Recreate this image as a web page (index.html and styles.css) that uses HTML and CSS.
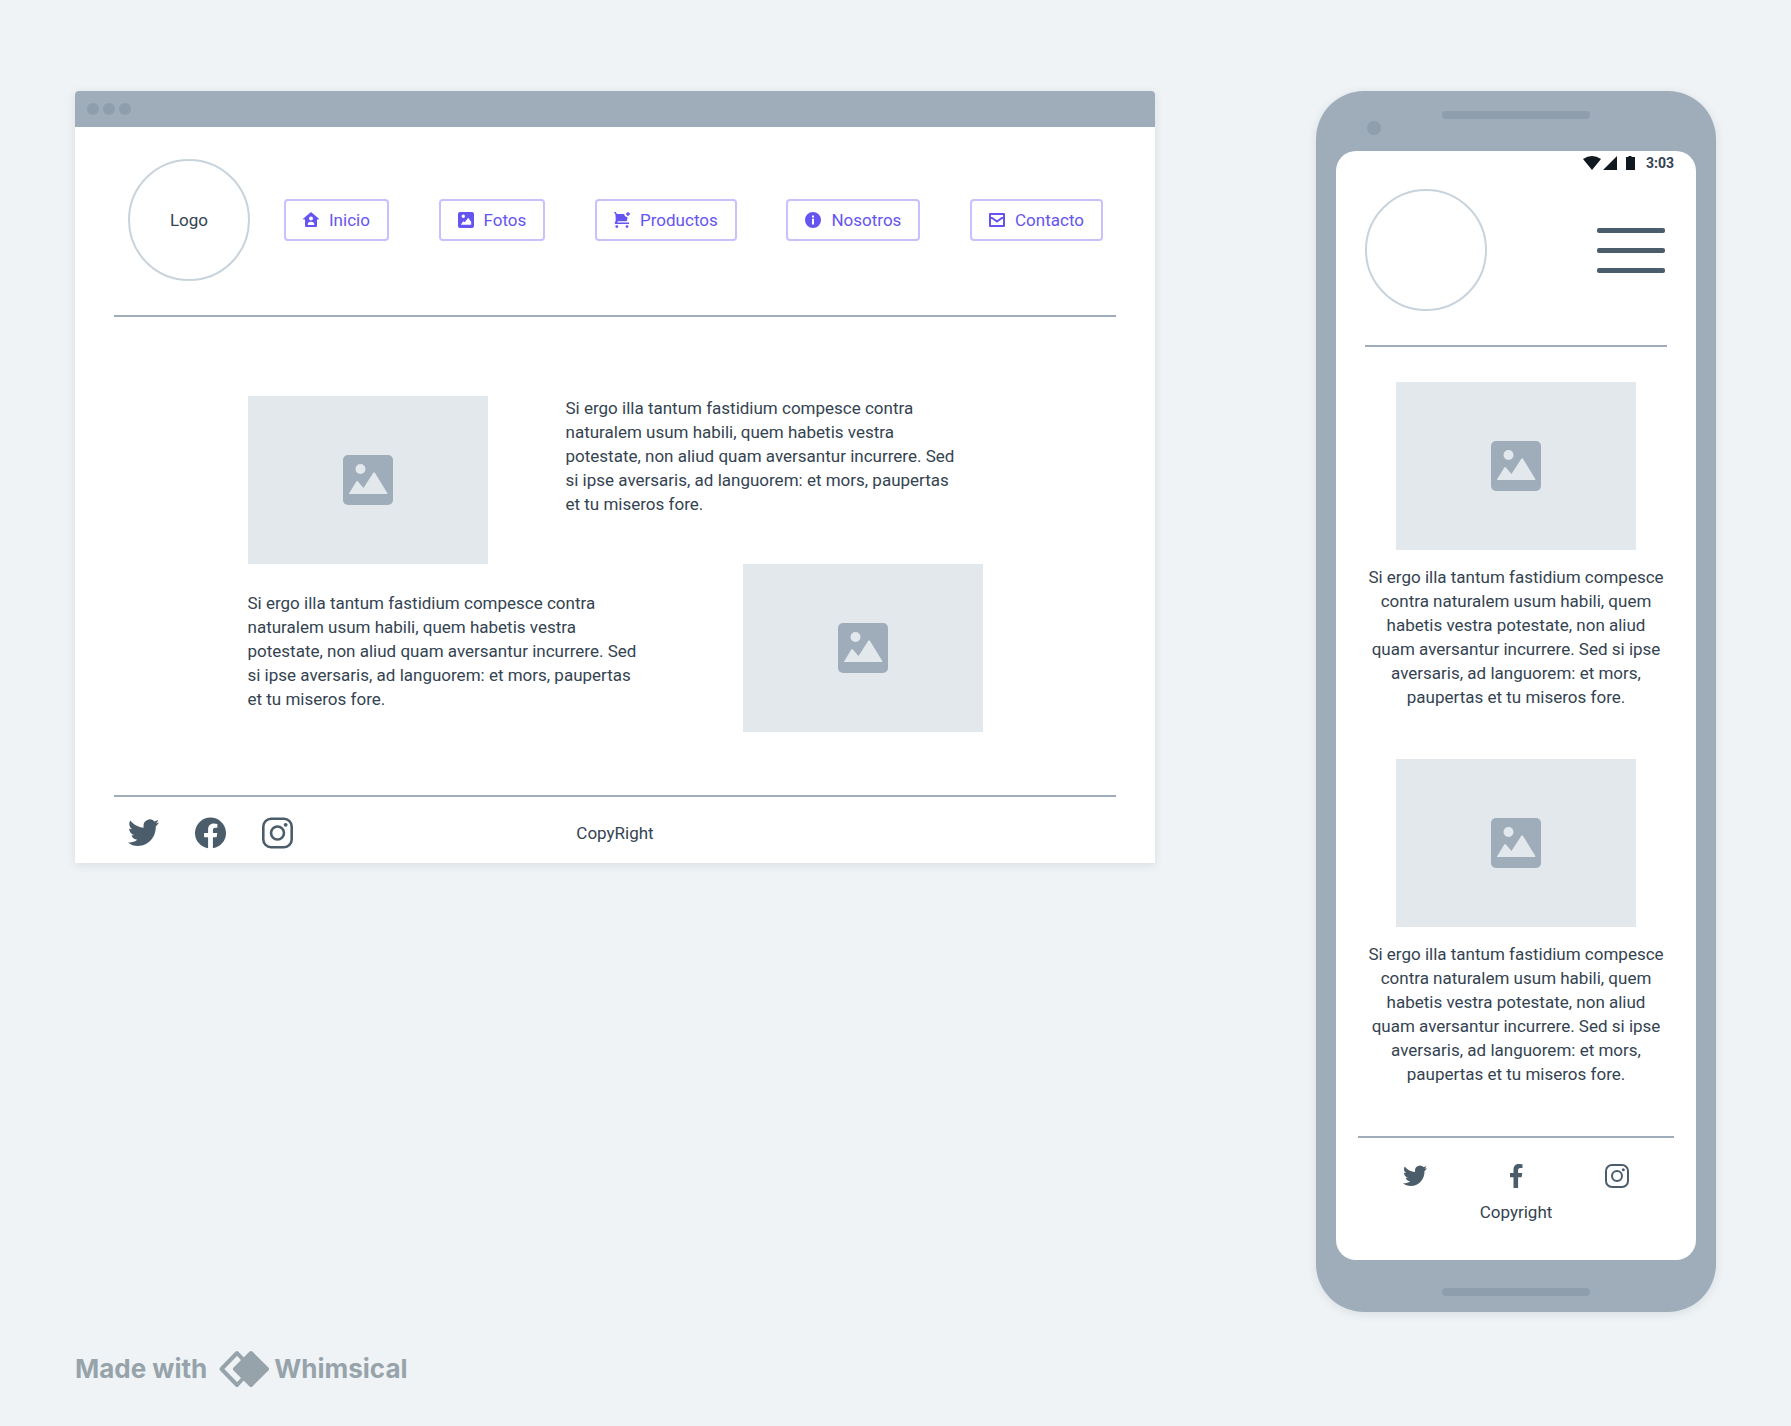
FILE: index.html
```html
<!DOCTYPE html>
<html lang="es">
<head>
<meta charset="utf-8">
<meta name="viewport" content="width=device-width, initial-scale=1">
<title>Wireframe</title>
<link rel="stylesheet" href="styles.css">
</head>
<body>
<svg class="sprite" aria-hidden="true">
  <symbol id="picture" viewBox="0 0 50 50">
    <rect width="50" height="50" rx="5" fill="#9eadb9"/>
    <circle cx="17.500" cy="14" r="5" fill="#e2e8ec"/>
    <path d="M6 38.500 13.300 26.500q.8-1.200 1.600 0l5.600 6.500 9.800-15.200q.8-1.200 1.600 0L44.300 38q.5 1-.6 1H6.300q-.6 0-.3-.5z" fill="#e2e8ec"/>
  </symbol>
  <symbol id="twitter" viewBox="0 0 24 21">
    <path d="M24 2.400c-.9.4-1.600.6-2.500.7.900-.6 1.600-1.500 1.900-2.600-.9.500-1.900.9-2.900 1.100A4.900 4.900 0 0 0 12 5.100c0 .5 0 .900.100 1.300C8 6.200 4.400 4.100 1.700.900c-1.300 2.300-.7 5.200 1.400 6.700-.8 0-1.500-.2-2.200-.6 0 2.500 1.700 4.600 4 5.100-.7.200-1.500.2-2.200.1.600 2 2.400 3.400 4.500 3.500-1.900 1.500-4.500 2.400-7.200 2.100C2.200 19.700 4.900 20.500 7.500 20.500c9.200 0 14.200-7.700 14-15C22.500 4.500 23.400 3.600 24 2.400z" fill="currentColor"/>
  </symbol>
  <symbol id="instagram" viewBox="0 0 24 24">
    <g fill="none" stroke="currentColor" stroke-width="2"><rect x="1" y="1" width="22" height="22" rx="6"/><circle cx="12" cy="12" r="5"/></g>
    <circle cx="18.300" cy="5.700" r="1.500" fill="currentColor"/>
  </symbol>
</svg>

<main class="board">
  <section class="browser" aria-label="Escritorio">
    <div class="titlebar"><i></i><i></i><i></i></div>
    <div class="page">
      <header class="page-header">
        <div class="logo">Logo</div>
        <nav class="menu">
          <button type="button"><svg viewBox="0 0 16 16"><path fill-rule="evenodd" d="M8 0 16 6.800 15.500 7.500H14V14a1 1 0 0 1-1 1H3a1 1 0 0 1-1-1V7.500H.5L0 6.800zM8 4.500a2 2 0 1 0 0 4 2 2 0 0 0 0-4zM4.800 13h6.400v-1c0-3-6.400-3-6.400 0z"/></svg>Inicio</button>
          <button type="button"><svg viewBox="0 0 16 16"><path fill-rule="evenodd" d="M2 0h12a2 2 0 0 1 2 2v12a2 2 0 0 1-2 2H2a2 2 0 0 1-2-2V2a2 2 0 0 1 2-2zm3.300 2.600a1.700 1.700 0 1 0 0 3.400 1.700 1.700 0 0 0 0-3.400zM2.800 12.800h10.400V10L10.300 5.800 6.700 10.200 5.300 9.300z"/></svg>Fotos</button>
          <button type="button"><svg viewBox="0 0 16 16"><path d="M0 0h1.600L3 2h7.200q.2 2.800 3.300 3.200L13 8.500q-.2.700-1 .7H3.800l-.5 1.300H15V12H1.600q-1.300-.3-.8-1.500l1-2L1.400 2.500z"/><path d="M13.300 0h1.400v1.300H16v1.400h-1.300V4h-1.400V2.700H12V1.300h1.300z"/><circle cx="2.800" cy="14.600" r="1.400"/><circle cx="13" cy="14.600" r="1.400"/></svg>Productos</button>
          <button type="button"><svg viewBox="0 0 16 16"><path fill-rule="evenodd" d="M8 0a8 8 0 1 1 0 16A8 8 0 0 1 8 0zM7 3.500v2h2v-2zM7 6.700v5.800h2V6.700z"/></svg>Nosotros</button>
          <button type="button"><svg viewBox="0 0 16 16"><path d="M1 2h14v12H1zM1 4.500 8 9.500 15 4.500" fill="none" stroke="currentColor" stroke-width="2" stroke-linejoin="round"/></svg>Contacto</button>
        </nav>
      </header>
      <div class="articles">
        <div class="picture"><svg><use href="#picture"/></svg></div>
        <p class="lead">Si ergo illa tantum fastidium compesce contra naturalem usum habili, quem habetis vestra potestate, non aliud quam aversantur incurrere. Sed si ipse aversaris, ad languorem: et mors, paupertas et tu miseros fore.</p>
        <p class="second">Si ergo illa tantum fastidium compesce contra naturalem usum habili, quem habetis vestra potestate, non aliud quam aversantur incurrere. Sed si ipse aversaris, ad languorem: et mors, paupertas et tu miseros fore.</p>
        <div class="picture"><svg><use href="#picture"/></svg></div>
      </div>
      <footer class="page-footer">
        <div class="social">
          <a href="#" aria-label="Twitter"><svg><use href="#twitter"/></svg></a>
          <a href="#" aria-label="Facebook"><svg viewBox="0 0 32 32"><path d="M16 0a16 16 0 0 0-2.500 31.800V20.500H9.400V16h4.100v-3.500c0-4 2.400-6.200 6-6.200q1.800 0 3.600.3v3.900h-2c-2 0-2.600 1.200-2.600 2.500v3H23l-.7 4.500h-3.800v11.300A16 16 0 0 0 16 0z" fill="currentColor"/></svg></a>
          <a href="#" aria-label="Instagram"><svg><use href="#instagram"/></svg></a>
        </div>
        <span>CopyRight</span>
      </footer>
    </div>
  </section>

  <section class="phone" aria-label="Móvil">
    <div class="phone-top"><i class="camera"></i><i class="speaker"></i></div>
    <div class="screen">
      <div class="status">
        <svg class="signals" viewBox="0 0 52 14"><path d="M0 3Q9-3 18 3L9 14zM34 0v14H20zM43 1h2.500V0h3v1H52v13h-9z"/></svg>
        <span>3:03</span>
      </div>
      <header class="phone-header">
        <div class="logo"></div>
        <button type="button" class="burger" aria-label="Menú"><i></i><i></i><i></i></button>
      </header>
      <article class="card">
        <div class="picture"><svg><use href="#picture"/></svg></div>
        <p>Si ergo illa tantum fastidium compesce contra naturalem usum habili, quem habetis vestra potestate, non aliud quam aversantur incurrere. Sed si ipse aversaris, ad languorem: et mors, paupertas et tu miseros fore.</p>
      </article>
      <article class="card">
        <div class="picture"><svg><use href="#picture"/></svg></div>
        <p>Si ergo illa tantum fastidium compesce contra naturalem usum habili, quem habetis vestra potestate, non aliud quam aversantur incurrere. Sed si ipse aversaris, ad languorem: et mors, paupertas et tu miseros fore.</p>
      </article>
      <footer class="phone-footer">
        <div class="social">
          <a href="#" aria-label="Twitter"><svg><use href="#twitter"/></svg></a>
          <a href="#" aria-label="Facebook"><svg viewBox="0 0 24 24"><path d="M9.500 24V13.300H6V9h3.500V5.500C9.500 2 11.600 0 14.900 0q2 0 3.600.3V4h-2c-2 0-2.400 1-2.400 2.200V9h4.200l-.7 4.300h-3.500V24z" fill="currentColor"/></svg></a>
          <a href="#" aria-label="Instagram"><svg><use href="#instagram"/></svg></a>
        </div>
        <span>Copyright</span>
      </footer>
    </div>
    <div class="phone-bottom"><i class="speaker"></i></div>
  </section>
</main>

<footer class="credit">
  <span>Made with</span>
  <svg viewBox="0 0 52 38"><path d="M19 3 3.500 19 19 35 34 19z" fill="none" stroke="currentColor" stroke-width="4" stroke-linejoin="round"/><path d="M33 3 17 19 33 35 49 19z" fill="currentColor" stroke="currentColor" stroke-width="4" stroke-linejoin="round"/></svg>
  <span>Whimsical</span>
</footer>
</body>
</html>
```
FILE: styles.css
```css
:root {
  --frame: #9eadb9;
  --frame-dark: #8f9eac;
  --ink: #344351;
  --icon: #4b5d6b;
  --outline: #c8d3dc;
  --accent: #6554f0;
}

* { box-sizing: border-box; }

body {
  margin: 0;
  padding: 91px 75px 36px;
  background: #eff3f6;
  color: var(--ink);
  font: 17px/24px Roboto, "Liberation Sans", sans-serif;
}

p { margin: 0; }
svg { display: block; }
a { color: inherit; }
.sprite { display: none; }

.board {
  display: flex;
  align-items: flex-start;
  gap: 161px;
}

.browser {
  flex: 1;
  background: #fff;
  border-radius: 4px 4px 0 0;
  box-shadow: 0 2px 10px rgba(57, 72, 86, 0.12);
}

.titlebar {
  display: flex;
  align-items: center;
  gap: 4px;
  height: 36px;
  padding-left: 12px;
  background: var(--frame);
  border-radius: 4px 4px 0 0;
}

.titlebar i {
  width: 12px;
  height: 12px;
  border-radius: 50%;
  background: var(--frame-dark);
}

.page { padding: 0 39px; }

.page-header {
  display: flex;
  align-items: center;
  gap: 34px;
  padding: 32px 13px 34px 14px;
  border-bottom: 2px solid var(--frame);
}

.logo {
  display: grid;
  place-items: center;
  flex: none;
  width: 122px;
  height: 122px;
  border: 2px solid var(--outline);
  border-radius: 50%;
}

.menu {
  display: flex;
  flex: 1;
  justify-content: space-between;
}

.menu button {
  display: flex;
  align-items: center;
  gap: 10px;
  height: 42px;
  padding: 0 17px;
  border: 2px solid #c8c1fb;
  border-radius: 4px;
  background: #fff;
  color: var(--accent);
  font: inherit;
}

.menu svg {
  width: 16px;
  height: 16px;
  fill: currentColor;
}

.picture {
  display: grid;
  place-items: center;
  width: 240px;
  height: 168px;
  background: #e2e8ec;
}

.picture svg {
  width: 50px;
  height: 50px;
}

.articles {
  display: grid;
  grid-template-columns: 240px 1fr 240px;
  width: 735px;
  max-width: 100%;
  margin: 0 auto;
  padding: 79px 0 63px;
}

.lead {
  grid-column: 2 / 4;
  width: 396px;
  margin-left: 78px;
}

.second {
  grid-column: 1 / 3;
  width: 396px;
  padding-top: 27px;
}

.page-footer {
  display: grid;
  grid-template-columns: 1fr auto 1fr;
  align-items: center;
  padding: 20px 14px 14px;
  border-top: 2px solid var(--frame);
}

.page-footer .social {
  display: flex;
  align-items: center;
  gap: 36px;
}

.page-footer .social svg {
  width: 31px;
  height: 32px;
}

.phone {
  flex: none;
  width: 400px;
  padding: 0 20px;
  border-radius: 48px;
  background: var(--frame);
  box-shadow: 0 2px 10px rgba(57, 72, 86, 0.12);
}

.phone-top {
  display: grid;
  grid-template-columns: 1fr 148px 1fr;
  height: 60px;
  padding-top: 20px;
}

.speaker {
  width: 148px;
  height: 8px;
  border-radius: 4px;
  background: var(--frame-dark);
}

.camera {
  width: 14px;
  height: 14px;
  margin: 10px 0 0 31px;
  border-radius: 50%;
  background: var(--frame-dark);
}

.phone-bottom {
  display: flex;
  justify-content: center;
  height: 52px;
  padding-top: 28px;
}

.screen {
  padding: 0 22px 36px;
  border-radius: 20px;
  background: #fff;
}

.status {
  display: flex;
  align-items: center;
  justify-content: flex-end;
  gap: 11px;
  height: 24px;
  font-size: 14px;
  font-weight: 700;
}

.signals {
  width: 52px;
  height: 14px;
  fill: #101820;
}

.phone-header {
  display: flex;
  align-items: center;
  justify-content: space-between;
  margin: 0 7px 35px;
  padding: 14px 0 34px;
  border-bottom: 2px solid var(--frame);
}

.burger {
  display: grid;
  gap: 15px;
  width: 68px;
  margin-right: 2px;
  padding: 0;
  border: 0;
  background: none;
}

.burger i {
  height: 5px;
  border-radius: 2px;
  background: var(--icon);
}

.card {
  display: grid;
  justify-items: center;
  gap: 15px;
  margin-bottom: 50px;
  text-align: center;
}

.card p { width: 306px; }

.phone-footer {
  display: grid;
  justify-items: center;
  gap: 12px;
  padding-top: 26px;
  border-top: 2px solid var(--frame);
}

.social { color: var(--icon); }

.phone-footer .social {
  display: flex;
  justify-content: space-between;
  width: 226px;
}

.phone-footer .social svg {
  width: 24px;
  height: 24px;
}

.credit {
  display: flex;
  align-items: center;
  gap: 4px;
  margin-top: 38px;
  color: #97a3ab;
  font: 700 26px/38px Inter, sans-serif;
}

.credit svg {
  width: 52px;
  height: 38px;
  margin-left: 7px;
}
```
